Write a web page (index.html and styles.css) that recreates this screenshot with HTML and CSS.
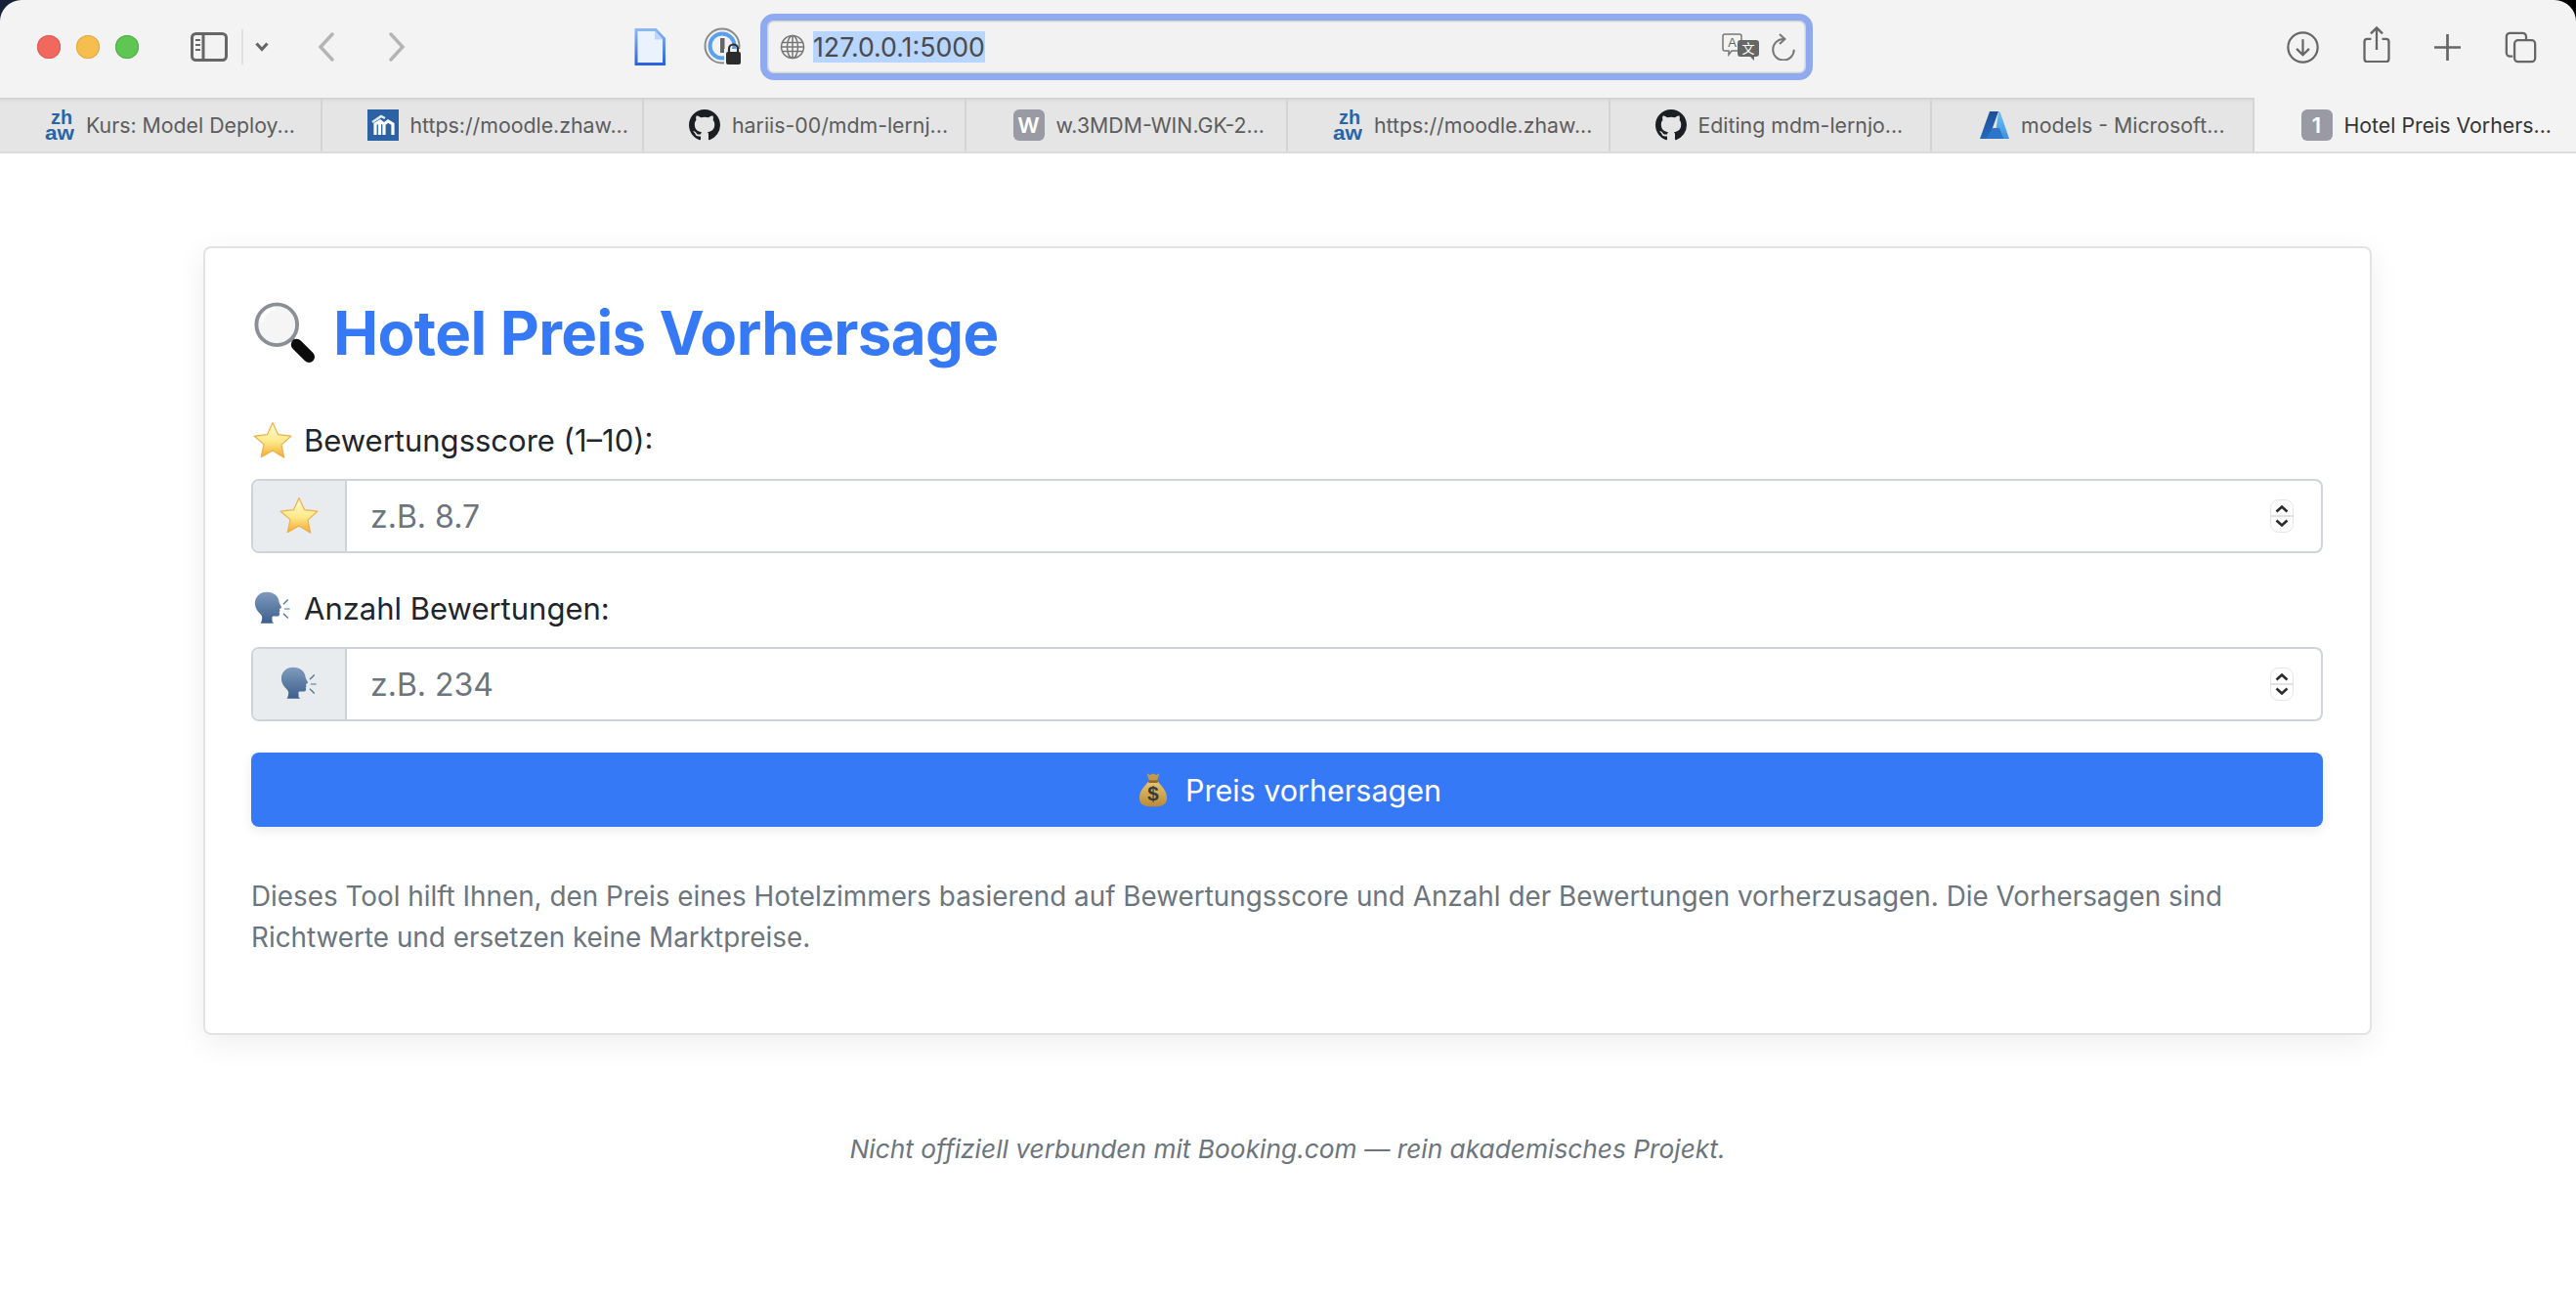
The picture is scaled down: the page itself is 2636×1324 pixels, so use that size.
FILE: index.html
```html
<!DOCTYPE html>
<html lang="de"><head>
  <meta name="viewport" content="width=device-width, initial-scale=1.0">
  <title>Hotel Preis Vorhersage</title>
  <link rel="stylesheet" href="styles.css">
</head>
<body>
  <!-- shared icons -->
  <svg class="defs" width="0" height="0" aria-hidden="true">
    <defs>
      <linearGradient id="starFill" x1="0" y1="0" x2="0" y2="1">
        <stop offset="0" stop-color="#fffbd8"/>
        <stop offset="0.55" stop-color="#fde98a"/>
        <stop offset="1" stop-color="#f3a72c"/>
      </linearGradient>
      <linearGradient id="headFill" x1="0" y1="0" x2="0" y2="1">
        <stop offset="0" stop-color="#7f9bbd"/>
        <stop offset="1" stop-color="#3d5f8c"/>
      </linearGradient>
      <linearGradient id="bagFill" x1="0" y1="0" x2="0" y2="1">
        <stop offset="0" stop-color="#e9c777"/>
        <stop offset="1" stop-color="#b98a33"/>
      </linearGradient>
      <linearGradient id="pageEdge" x1="0" y1="0" x2="0" y2="1">
        <stop offset="0" stop-color="#8db7f5"/>
        <stop offset="1" stop-color="#2a63dc"/>
      </linearGradient>
      <linearGradient id="azureLight" x1="0" y1="0" x2="0" y2="1">
        <stop offset="0" stop-color="#6cc4f5"/>
        <stop offset="1" stop-color="#3f8fdf"/>
      </linearGradient>
      <linearGradient id="azureDark" x1="0" y1="0" x2="0" y2="1">
        <stop offset="0" stop-color="#1d4f96"/>
        <stop offset="1" stop-color="#2369bd"/>
      </linearGradient>
      <symbol id="star" viewBox="0 0 40 40">
        <path d="M20 1.500l5.600 12.200 13.200 1.500-9.800 8.900 2.700 13.100L20 30.100 8.300 36.700 11 23.600 1.200 15.200l13.200-1.500z" fill="url(#starFill)" stroke="#eeb04a" stroke-width="1.200" stroke-linejoin="round"/>
      </symbol>
      <symbol id="head" viewBox="0 -1 41 42">
        <path d="M14 2c8 0 13 4.500 13.500 11 .2 1.500 2.500 4.500 2.500 5.300 0 1-2.200 1.200-2.200 2 0 .8.600 1.200.600 1.900 0 .7-.800 1-.800 1.500 0 .6.400 1 .400 1.700 0 1.800-1.400 2.600-3.300 2.600-1.800 0-3.700-.2-4.700.4v4.600c0 1 1 1.500 2 2.500H7.500c1.200-2 2-4 1.500-7.500C8.500 25.500 1.500 22 1.500 14 1.500 7 7 2 14 2z" fill="url(#headFill)"/>
        <path d="M32 15l5-5M33 20h6M32 25l5 5" stroke="#4f7199" stroke-width="1.300" fill="none"/>
      </symbol>
      <symbol id="updown" viewBox="0 0 24 34">
        <rect x=".5" y=".5" width="23" height="33" rx="8" fill="#fff" stroke="#e4e4e4"/>
        <path d="M.5 17h23" stroke="#d9d9d9" stroke-width="1.500"/>
        <path d="M6.500 12.500l5.500-5 5.500 5M6.500 21.500l5.500 5 5.500-5" stroke="#2b2b2b" stroke-width="2.600" fill="none"/>
      </symbol>
      <symbol id="zhaw" viewBox="0 0 30 32">
        <text x="17" y="15" text-anchor="middle" textLength="22" lengthAdjust="spacingAndGlyphs" class="zhaw-text">zh</text>
        <text x="15" y="31" text-anchor="middle" textLength="30" lengthAdjust="spacingAndGlyphs" class="zhaw-text">aw</text>
      </symbol>
      <symbol id="github" viewBox="0 0 16 16">
        <path fill="#1b1f23" d="M8 0C3.580 0 0 3.580 0 8c0 3.540 2.290 6.530 5.470 7.590.4.070.55-.170.55-.380 0-.190-.010-.820-.010-1.490-2.010.370-2.530-.490-2.690-.940-.090-.230-.480-.940-.820-1.130-.280-.150-.680-.520-.010-.530.630-.010 1.080.580 1.230.820.720 1.210 1.870.870 2.330.660.070-.520.280-.870.510-1.070-1.780-.200-3.640-.890-3.640-3.950 0-.870.310-1.590.820-2.150-.080-.200-.360-1.020.080-2.120 0 0 .670-.210 2.200.820.640-.180 1.320-.270 2-.270s1.360.090 2 .270c1.530-1.040 2.200-.820 2.200-.820.440 1.100.160 1.920.080 2.120.510.560.820 1.270.820 2.150 0 3.070-1.870 3.750-3.650 3.950.290.250.540.730.540 1.480 0 1.070-.010 1.930-.010 2.200 0 .210.150.460.550.380A8.010 8.010 0 0 0 16 8c0-4.420-3.580-8-8-8z"/>
      </symbol>
    </defs>
  </svg>

  <!-- Browser toolbar -->
  <div class="desktop-edge">
  <header class="toolbar">
    <div class="traffic">
      <span class="dot red"></span>
      <span class="dot yellow"></span>
      <span class="dot green"></span>
    </div>
    <svg class="ico sidebar" width="38" height="30" viewBox="0 0 38 30"><rect x="1.500" y="1.500" width="35" height="27" rx="4" fill="none" stroke="#666" stroke-width="3"/><path d="M13 2v26" stroke="#666" stroke-width="3" fill="none"/><path d="M5 8h5M5 13h5M5 18h5" stroke="#666" stroke-width="2" fill="none"/></svg>
    <span class="sep"></span>
    <svg class="ico chev" width="14" height="10" viewBox="0 0 14 10"><path d="M1.500 1.500L7 7.500l5.500-6" fill="none" stroke="#666" stroke-width="3.200"/></svg>
    <svg class="ico back" width="18" height="32" viewBox="0 0 18 32"><path d="M16 3L4 16l12 13" fill="none" stroke="#b4b4b4" stroke-width="3.400" stroke-linecap="round"/></svg>
    <svg class="ico forward" width="18" height="32" viewBox="0 0 18 32"><path d="M2 3l12 13L2 29" fill="none" stroke="#b4b4b4" stroke-width="3.400" stroke-linecap="round"/></svg>

    <svg class="ico page" width="32" height="38" viewBox="0 0 32 38"><path d="M2 1.500h20l8.500 9V36.500H2z" fill="#eaf2fe" stroke="url(#pageEdge)" stroke-width="3"/><path d="M21 3v8.500h8" fill="#bcd5f8" stroke="none"/></svg>
    <svg class="ico onepass" width="40" height="40" viewBox="0 0 40 40">
      <circle cx="19" cy="19" r="17.500" fill="none" stroke="#8a8a8a" stroke-width="2"/>
      <circle cx="19" cy="19" r="12.500" fill="none" stroke="#5a9ff0" stroke-width="4"/>
      <rect x="17" y="11" width="4.500" height="15" fill="#666"/>
      <rect x="21" y="22" width="19" height="18" fill="#f3f3f3"/>
      <rect x="23" y="25" width="15" height="13" rx="2" fill="#2c2c2c"/>
      <path d="M26 25v-3a4.500 4.500 0 0 1 9 0v3" fill="none" stroke="#2c2c2c" stroke-width="2.200"/>
    </svg>

    <div class="urlbar">
      <svg class="ico" width="26" height="26" viewBox="0 0 26 26"><g fill="none" stroke="#777" stroke-width="1.500"><circle cx="13" cy="13" r="11.500"/><ellipse cx="13" cy="13" rx="5.500" ry="11.500"/><path d="M13 1.500v23M2.500 8.500h21M2.500 17.500h21M1.500 13h23"/></g></svg>
      <span class="url">127.0.0.1:5000</span>
      <span class="urlspace"></span>
      <svg class="ico" width="38" height="28" viewBox="0 0 38 28">
        <path d="M3 1h15a2 2 0 0 1 2 2v13a2 2 0 0 1-2 2h-8l-3 4v-4H3a2 2 0 0 1-2-2V3a2 2 0 0 1 2-2z" fill="#f3f3f3" stroke="#777" stroke-width="1.500"/>
        <text x="10.500" y="14" text-anchor="middle" class="tr-a">A</text>
        <path d="M19 7h16a3 3 0 0 1 3 3v11a3 3 0 0 1-3 3h-2v4l-4-4H19a3 3 0 0 1-3-3V10a3 3 0 0 1 3-3z" fill="#666"/>
        <text x="27" y="20" text-anchor="middle" class="tr-x">文</text>
      </svg>
      <svg class="ico reload" width="24" height="28" viewBox="0 0 24 28"><path d="M12 6A10.800 10.800 0 1 0 22.800 16.800" fill="none" stroke="#777" stroke-width="2"/><path d="M8 1l5.500 5L8 11" fill="none" stroke="#777" stroke-width="2"/></svg>
    </div>

    <div class="toolbar-right">
      <svg class="ico" width="33" height="33" viewBox="0 0 36 36"><circle cx="18" cy="18" r="16.500" fill="none" stroke="#666" stroke-width="2.400"/><path d="M18 9v17M11 19.500l7 7 7-7" fill="none" stroke="#666" stroke-width="2.400"/></svg>
      <svg class="ico share" width="30" height="37" viewBox="0 0 30 40"><path d="M9 14H4.500a3 3 0 0 0-3 3v19a3 3 0 0 0 3 3h21a3 3 0 0 0 3-3V17a3 3 0 0 0-3-3H21M15 26V2M8.500 8L15 1.500 21.500 8" fill="none" stroke="#666" stroke-width="2.500"/></svg>
      <svg class="ico" width="27" height="27" viewBox="0 0 28 28"><path d="M14 0v28M0 14h28" stroke="#666" stroke-width="2.800"/></svg>
      <svg class="ico" width="35" height="33" viewBox="0 0 36 36"><path d="M9 28H6a4 4 0 0 1-4-4V6a4 4 0 0 1 4-4h14a4 4 0 0 1 4 4v3" fill="none" stroke="#666" stroke-width="2.500"/><rect x="11" y="10" width="23" height="24" rx="4" fill="none" stroke="#666" stroke-width="2.500"/></svg>
    </div>
  </header>
  </div>

  <!-- Tabs -->
  <nav class="tabs">
    <div class="tab"><svg class="favicon" width="30" height="32"><use href="#zhaw"/></svg><span class="tab-title">Kurs: Model Deploy...</span></div>
    <div class="tab">
      <svg class="favicon" width="32" height="32" viewBox="0 0 32 32"><rect width="32" height="32" fill="#2b62a4"/><path d="M8 26V15l5-3 4 3v11M17 15l4-3 5 3v11M12.500 26V13" fill="none" stroke="#fff" stroke-width="3.200"/><path d="M5 13l9-6 4 2" fill="none" stroke="#e4ecf5" stroke-width="2.400"/></svg>
      <span class="tab-title">https://moodle.zhaw...</span>
    </div>
    <div class="tab"><svg class="favicon" width="32" height="32"><use href="#github"/></svg><span class="tab-title">hariis-00/mdm-lernj...</span></div>
    <div class="tab"><span class="letter">W</span><span class="tab-title">w.3MDM-WIN.GK-2...</span></div>
    <div class="tab"><svg class="favicon" width="30" height="32"><use href="#zhaw"/></svg><span class="tab-title">https://moodle.zhaw...</span></div>
    <div class="tab"><svg class="favicon" width="32" height="32"><use href="#github"/></svg><span class="tab-title">Editing mdm-lernjo...</span></div>
    <div class="tab">
      <svg class="favicon azure" width="30" height="30" viewBox="0 0 30 30"><path d="M10 1h9L9 29H0z" fill="url(#azureDark)"/><path d="M19 1q1.500 0 2 1.500L30 29H20l-3.500-9.500z" fill="url(#azureLight)"/><path d="M13 18h7l4 10.500q-.5.500-1 .5H6z" fill="#2b76c8"/></svg>
      <span class="tab-title">models - Microsoft...</span>
    </div>
    <div class="tab active"><span class="letter">1</span><span class="tab-title">Hotel Preis Vorhers...</span></div>
  </nav>

  <!-- Page content -->
  <main class="page-body">
    <section class="card">
      <h1 class="title">
        <svg class="title-ico" width="64" height="64" viewBox="0 0 66 66">
          <path d="M38 40l3-3 5 5-3 3z" fill="#55585e"/>
          <path d="M46 46l13 13" stroke="#0c0c0c" stroke-width="12" stroke-linecap="round"/>
          <circle cx="25" cy="25" r="21.500" fill="#f5f5f6" stroke="#8b8e95" stroke-width="4"/>
          <path d="M9 22a16.500 16.500 0 0 1 14-14" fill="none" stroke="#fff" stroke-width="3"/>
        </svg>
        Hotel Preis Vorhersage
      </h1>

      <label class="field-label"><svg class="label-ico" width="40" height="40"><use href="#star"/></svg>Bewertungsscore (1–10):</label>
      <div class="input-group">
        <span class="addon"><svg width="40" height="40"><use href="#star"/></svg></span>
        <div class="input-box">
          <span class="placeholder">z.B. 8.7</span>
          <svg class="stepper" width="24" height="34"><use href="#updown"/></svg>
        </div>
      </div>

      <label class="field-label"><svg class="label-ico" width="40" height="40"><use href="#head"/></svg>Anzahl Bewertungen:</label>
      <div class="input-group">
        <span class="addon"><svg width="40" height="40"><use href="#head"/></svg></span>
        <div class="input-box">
          <span class="placeholder">z.B. 234</span>
          <svg class="stepper" width="24" height="34"><use href="#updown"/></svg>
        </div>
      </div>

      <button class="submit">
        <svg class="bag" width="30" height="38" viewBox="0 0 32 38">
          <path d="M9 1l3.500 2 3.500-1.500L19.500 3 23 1l-3 9h-8z" fill="#c49a4a"/>
          <path d="M11 9h10c1 4 10 9 10 19 0 7-5 9.500-15 9.500S1 35 1 28C1 18 10 13 11 9z" fill="url(#bagFill)"/>
          <rect x="10.500" y="8.500" width="11" height="3" rx="1.500" fill="#8f6a24"/>
          <text x="16" y="31" text-anchor="middle" class="bag-text">$</text>
        </svg>
        Preis vorhersagen
      </button>

      <p class="note">Dieses Tool hilft Ihnen, den Preis eines Hotelzimmers basierend auf Bewertungsscore und Anzahl der Bewertungen vorherzusagen. Die Vorhersagen sind Richtwerte und ersetzen keine Marktpreise.</p>
    </section>

    <footer class="foot">Nicht offiziell verbunden mit Booking.com — rein akademisches Projekt.</footer>
  </main>
</body>
</html>
```

FILE: styles.css
```css
* {
  box-sizing: border-box;
}

html, body {
  margin: 0;
  height: 100%;
}

body {
  font-family: Inter, "Liberation Sans", sans-serif;
  background: #fff;
  color: #212529;
  overflow: hidden;
}

.defs {
  display: block;
  height: 0;
}

.ico {
  display: block;
  flex: none;
}

/* toolbar */
.desktop-edge {
  background: linear-gradient(90deg, #16203a 50%, #000 50%);
}

.toolbar {
  height: 100px;
  background: #f3f3f3;
  border-top-left-radius: 22px;
  border-top-right-radius: 22px;
  display: flex;
  align-items: center;
  padding: 0 0 4px 38px;
}

.traffic {
  display: flex;
  gap: 16px;
}

.dot {
  width: 24px;
  height: 24px;
  border-radius: 50%;
}

.red { background: #f1685f; box-shadow: inset 0 0 0 1px #dc5a50; }
.yellow { background: #f6bd4f; box-shadow: inset 0 0 0 1px #e3a73f; }
.green { background: #5fc653; box-shadow: inset 0 0 0 1px #50ae46; }

.sidebar { margin-left: 53px; }

.sep {
  width: 2px;
  height: 36px;
  background: #e0e0e0;
  margin-left: 14px;
}

.chev { margin-left: 12px; }
.back { margin-left: 49px; }
.forward { margin-left: 56px; }
.page { margin-left: 233px; }
.onepass { margin-left: 39px; }

.urlbar {
  width: 1077px;
  height: 68px;
  margin-left: 18px;
  background: #f2f2f2;
  border: 7px solid #8faaee;
  border-radius: 14px;
  box-shadow: inset 0 0 0 1.500px #d4d4d4;
  display: flex;
  align-items: center;
  padding: 0 11px 0 13px;
  gap: 8px;
}

.url {
  background: #b7d5fd;
  color: #4a4a4a;
  font-size: 26.7px;
  line-height: 32px;
}

.urlspace {
  flex: 1;
}

.reload {
  margin-left: 5px;
}

.toolbar-right {
  margin-left: auto;
  padding-right: 39px;
  display: flex;
  align-items: center;
  gap: 44px;
}

.share {
  margin-top: -5px;
}

/* tabs */
.tabs {
  height: 57px;
  background: #e5e5e5;
  border-top: 1px solid #cfcfcf;
  border-bottom: 2px solid #dcdcdc;
  display: grid;
  grid-template-columns: repeat(8, 1fr);
}

.tab {
  display: flex;
  align-items: center;
  gap: 12px;
  padding-left: 46px;
  border-right: 2px solid #d4d4d4;
  font-size: 21.3px;
  color: #5c5c5c;
  box-shadow: inset 0 6px 5px -5px #d2d2d2;
  white-space: nowrap;
}

.tab:last-child {
  border-right: 0;
}

.tab.active {
  background: #f3f3f3;
  color: #333;
  box-shadow: none;
  margin-top: -1px;
}

.favicon {
  flex: none;
}

.azure {
  margin-left: 3px;
}

.zhaw-text {
  font-family: "Liberation Sans", sans-serif;
  font-size: 21px;
  font-weight: 700;
  fill: #2a64a6;
}

.letter {
  width: 32px;
  height: 32px;
  flex: none;
  margin-left: 2px;
  border-radius: 6px;
  background: #9a9aa4;
  color: #fff;
  font-size: 22px;
  font-weight: 600;
  display: flex;
  align-items: center;
  justify-content: center;
}

.tr-a {
  font-family: "Liberation Sans", sans-serif;
  font-size: 13px;
  fill: #666;
}

.tr-x {
  font-family: "Noto Sans CJK SC", sans-serif;
  font-size: 13px;
  fill: #fff;
}

/* card */
.page-body {
  padding: 95px 209px 0 208px;
}

.card {
  height: 807px;
  background: #fff;
  border: 2px solid #e2e3e5;
  border-radius: 8px;
  padding: 51px 48px 0 47px;
  box-shadow: 0 8px 32px rgba(0, 0, 0, 0.07);
}

.title {
  margin: 0;
  display: flex;
  align-items: center;
  gap: 18px;
  font-size: 61.8px;
  line-height: 72px;
  font-weight: 700;
  color: #3579f6;
  letter-spacing: -0.6px;
}

.title-ico {
  flex: none;
  margin: -2px 0 0 2px;
}

.field-label {
  display: flex;
  align-items: center;
  gap: 12px;
  font-size: 31px;
  line-height: 48px;
  color: #212529;
}

.title + .field-label {
  margin-top: 50px;
}

.input-group + .field-label {
  margin-top: 33px;
}

.label-ico {
  flex: none;
  margin-left: 2px;
}

.input-group {
  display: flex;
  height: 76px;
  margin-top: 15px;
  border: 2px solid #ced4da;
  border-radius: 8px;
  overflow: hidden;
}

.addon {
  width: 96px;
  flex: none;
  background: #e9ecef;
  border-right: 2px solid #ced4da;
  display: flex;
  align-items: center;
  justify-content: center;
}

.input-box {
  flex: 1;
  display: flex;
  align-items: center;
  justify-content: space-between;
  padding: 0 28px 0 24px;
}

.placeholder {
  font-size: 32px;
  color: #6c757d;
}

.stepper {
  display: block;
}

.submit {
  display: flex;
  align-items: center;
  justify-content: center;
  gap: 18px;
  width: 100%;
  height: 76px;
  margin-top: 32px;
  padding-left: 12px;
  border: none;
  border-radius: 8px;
  background: #3579f6;
  color: #fff;
  font-family: inherit;
  font-size: 30.500px;
  box-shadow: 0 4px 12px rgba(0, 0, 0, 0.08);
}

.bag-text {
  font-family: "Liberation Sans", sans-serif;
  font-size: 22px;
  font-weight: 700;
  fill: #3b3a36;
}

.note {
  margin: 50px 0 0;
  font-size: 27.850px;
  line-height: 42px;
  color: #6c757d;
}

.foot {
  margin-top: 96px;
  text-align: center;
  font-size: 26.300px;
  line-height: 42px;
  font-style: italic;
  color: #6c757d;
}
```
